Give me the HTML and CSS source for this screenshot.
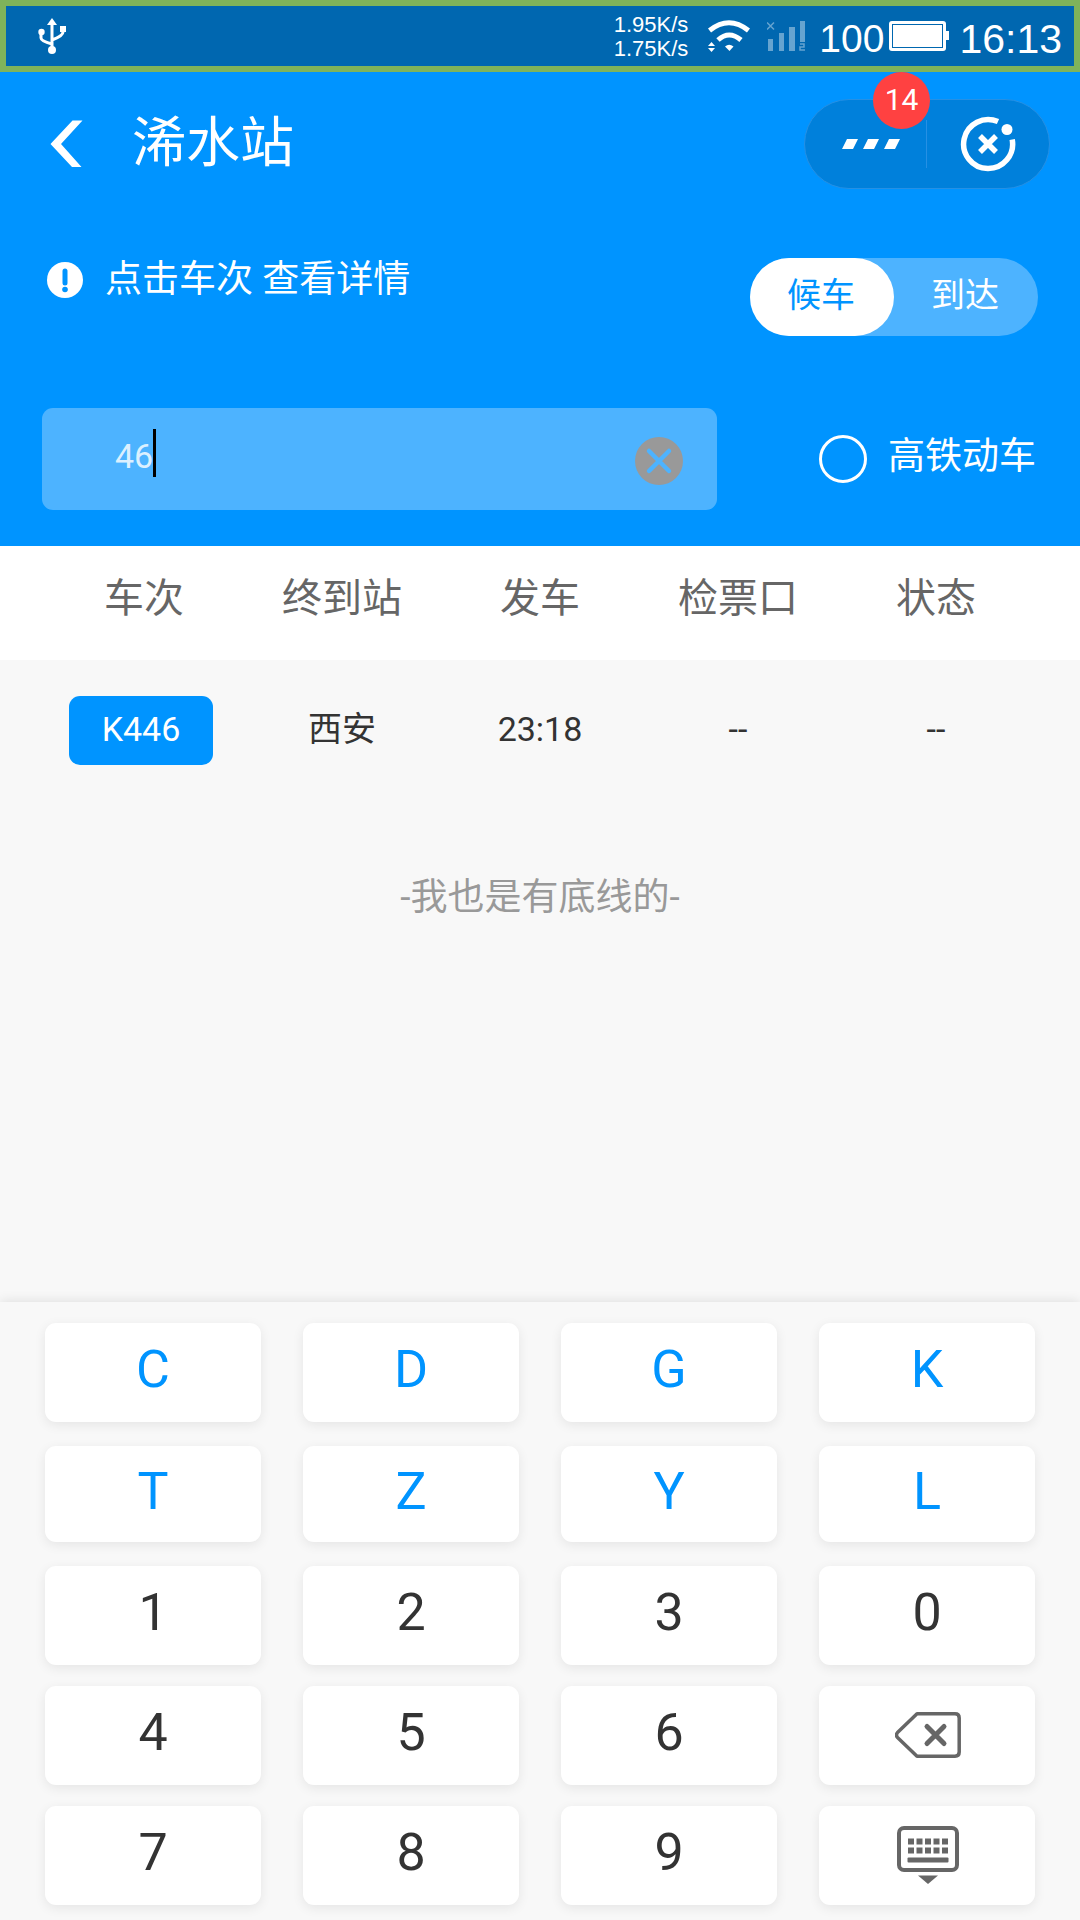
FILE: index.html
```html
<!DOCTYPE html>
<html lang="zh-CN">
<head>
<meta charset="utf-8">
<meta name="viewport" content="width=device-width, initial-scale=1">
<title>浠水站</title>
<link rel="stylesheet" href="styles.css">
</head>
<body>
<div class="page">
  <div class="status">
    <svg class="status-usb" width="28" height="36" viewBox="0 0 28 36" fill="none" stroke="#fff">
      <path d="M14 5v27M14 26Q3 23 3 20V14M14 22Q25 18 25 14V10" stroke-width="3"/>
      <path d="M14 0l5 7H9z" fill="#fff" stroke="none"/>
      <circle cx="3.500" cy="14" r="3.200" fill="#fff" stroke="none"/>
      <path d="M22 8h6v6h-6z" fill="#fff" stroke="none"/>
      <circle cx="14" cy="32" r="4" fill="#fff" stroke="none"/>
    </svg>
    <div class="status-speed"><span>1.95K/s</span><span>1.75K/s</span></div>
    <svg class="status-wifi" width="42" height="32" viewBox="0 0 42 32" fill="none" stroke="#fff" stroke-width="5">
      <path d="M1.500 10.500Q21-5 40.500 10.500M10 20Q21 10 33 20"/>
      <path d="M17 26.500Q21 23 25.500 26.500L21.500 31z" fill="#fff" stroke="none"/>
      <path d="M0 26l3.500-4 3.500 4zM0 28h7l-3.500 4z" fill="#fff" stroke="none"/>
    </svg>
    <svg class="status-signal" width="38" height="30" viewBox="0 0 38 30" fill="#66a4d0">
      <path d="M1 18h5v12H1zM12 12h5v18h-5zM22 6h6v24h-6zM33 0h5v21h-5z"/>
      <path d="M0 1.500l7 7M7 1.500l-7 7M33 23h4v3h-4v3h5" fill="none" stroke="#66a4d0" stroke-width="1.500"/>
    </svg>
    <span class="status-level">100</span>
    <svg class="status-battery" width="60" height="30" viewBox="0 0 60 30">
      <rect width="57" height="30" rx="3" fill="#fff"/>
      <rect x="3.500" y="3.500" width="50" height="23" fill="none" stroke="#0067b0"/>
      <path d="M57 10h3v9h-3z" fill="#fff"/>
    </svg>
    <span class="status-clock">16:13</span>
  </div>

  <header class="hero">
    <div class="titlebar">
      <button class="back" type="button" aria-label="返回">
        <svg width="34" height="48" viewBox="0 0 34 48"><path d="M22.500 0.500h10L11 24l20.500 23H22L0.500 24z" fill="#fff"/></svg>
      </button>
      <h1 class="title">浠水站</h1>
      <div class="capsule">
        <button class="capsule-btn capsule-more" type="button" aria-label="更多">
          <svg width="58" height="10" viewBox="0 0 58 10" fill="#fff"><path d="M5 0h11l-5 10H0zM26 0h11l-5 10H21zM47 0h11l-5 10H42z"/></svg>
          <span class="badge">14</span>
        </button>
        <button class="capsule-btn" type="button" aria-label="关闭">
          <svg width="56" height="56" viewBox="0 0 56 56" fill="none" stroke="#fff">
            <path d="M38 5.600A24.500 24.500 0 1 0 52.200 23.500" stroke-width="5.500"/>
            <path d="M20 20l16 16M36 20L20 36" stroke-width="5.500"/>
            <circle cx="47" cy="13.500" r="5.500" fill="#fff" stroke="none"/>
          </svg>
        </button>
      </div>
    </div>

    <div class="notice-row">
      <p class="notice">
        <svg width="36" height="36" viewBox="0 0 36 36"><circle cx="18" cy="18" r="18" fill="#fff"/><path d="M18 9v12" stroke="#0094ff" stroke-width="5" stroke-linecap="round"/><circle cx="18" cy="27.500" r="2.800" fill="#0094ff"/></svg>
        <span>点击车次 查看详情</span>
      </p>
      <div class="segment">
        <button class="segment-btn segment-on" type="button">候车</button>
        <button class="segment-btn" type="button">到达</button>
      </div>
    </div>

    <div class="search-row">
      <div class="search">
        <input class="search-input" style="width:2ch" type="text" value="46" aria-label="车次">
        <span class="caret"></span>
        <button class="clear" type="button" aria-label="清除">
          <svg width="48" height="48" viewBox="0 0 48 48"><circle cx="24" cy="24" r="24" fill="#999"/><path d="M14 14l20 20M34 14L14 34" stroke="#4db3ff" stroke-width="4.500" stroke-linecap="round"/></svg>
        </button>
      </div>
      <label class="filter"><input class="filter-radio" type="radio" name="fast"><span>高铁动车</span></label>
    </div>
  </header>

  <main class="board">
    <table class="trains">
      <thead>
        <tr><th>车次</th><th>终到站</th><th>发车</th><th>检票口</th><th>状态</th></tr>
      </thead>
      <tbody>
        <tr><td><button class="train" type="button">K446</button></td><td>西安</td><td>23:18</td><td>--</td><td>--</td></tr>
      </tbody>
    </table>
    <p class="end">-我也是有底线的-</p>
  </main>

  <section class="keypad" aria-label="键盘">
    <div class="keys keys-letters">
      <button type="button">C</button><button type="button">D</button><button type="button">G</button><button type="button">K</button>
      <button type="button">T</button><button type="button">Z</button><button type="button">Y</button><button type="button">L</button>
    </div>
    <div class="keys keys-digits">
      <button type="button">1</button><button type="button">2</button><button type="button">3</button><button type="button">0</button>
      <button type="button">4</button><button type="button">5</button><button type="button">6</button>
      <button class="key-icon" type="button" aria-label="删除">
        <svg width="66" height="46" viewBox="0 0 66 46" fill="none" stroke="#666" stroke-width="3.500" stroke-linejoin="round">
          <path d="M22 1.800H60Q64.200 1.800 64.200 6V40Q64.200 44.200 60 44.200H22L2.500 25.500Q.5 23 2.500 20.500Z"/>
          <path d="M32 14.500l17 17M49 14.500l-17 17" stroke-width="5" stroke-linecap="round"/>
        </svg>
      </button>
      <button type="button">7</button><button type="button">8</button><button type="button">9</button>
      <button class="key-icon" type="button" aria-label="收起键盘">
        <svg width="62" height="58" viewBox="0 0 62 58" fill="#666">
          <rect x="2" y="2" width="58" height="42" rx="5" fill="none" stroke="#666" stroke-width="4"/>
          <path d="M11 15.500h40M11 24.500h40" fill="none" stroke="#666" stroke-width="6" stroke-dasharray="6 2.500"/>
          <rect x="10.500" y="31.500" width="41" height="5" rx="1"/>
          <path d="M21 49.500h20L31 58z"/>
        </svg>
      </button>
    </div>
  </section>
</div>
</body>
</html>
```

FILE: styles.css
```css
* { box-sizing: border-box; }

body {
  margin: 0;
  background: #f8f8f8;
  color: #333;
  font-family: Roboto, "Noto Sans CJK SC", sans-serif;
}

h1, p { margin: 0; font-weight: 400; }

button {
  margin: 0;
  padding: 0;
  border: 0;
  background: none;
  color: inherit;
  font: inherit;
}

svg { display: block; flex: none; }

.page {
  display: flex;
  flex-direction: column;
  min-height: 100vh;
}

/* phone status bar */
.status {
  display: flex;
  align-items: center;
  height: 72px;
  padding: 0 12px 0 32px;
  border: 6px solid #7fb35a;
  background: #0067b0;
  color: #fff;
  font-family: "Liberation Sans", Arial, sans-serif;
}
.status-usb { margin-right: auto; }
.status-speed {
  display: flex;
  flex-direction: column;
  padding-top: 2px;
  font-size: 22px;
  line-height: 24px;
}
.status-wifi { margin-left: 20px; }
.status-signal { margin-left: 17px; }
.status-level {
  margin-left: 14px;
  padding-top: 5px;
  font-size: 39px;
  line-height: 40px;
}
.status-battery { margin-left: 5px; }
.status-clock {
  margin-left: 10px;
  padding-top: 5px;
  font-size: 41px;
  line-height: 44px;
}

/* blue header */
.hero {
  padding-bottom: 36px;
  background: #0094ff;
  color: #fff;
}
.titlebar {
  display: flex;
  align-items: center;
  height: 144px;
  padding: 0 30px 0 50px;
}
.title {
  margin-left: 48px;
  font-size: 54px;
  line-height: 64px;
}
.capsule {
  display: flex;
  width: 246px;
  height: 90px;
  margin-left: auto;
  border: 1px solid #2690e4;
  border-radius: 45px;
  background: #0080db;
}
.capsule-btn {
  position: relative;
  display: flex;
  flex: none;
  align-items: center;
  justify-content: center;
  width: 50%;
}
.capsule-more {
  padding-left: 10px;
  background: linear-gradient(#2690e4, #2690e4) right center / 1px 48px no-repeat;
}
.badge {
  position: absolute;
  top: -28px;
  right: -3px;
  width: 57px;
  height: 57px;
  border-radius: 50%;
  background: #ff4141;
  font-size: 30px;
  line-height: 56px;
  text-align: center;
}

.notice-row {
  display: flex;
  align-items: flex-start;
  justify-content: space-between;
  padding: 42px 42px 0 47px;
}
.notice {
  display: flex;
  align-items: center;
  gap: 22px;
  font-size: 37px;
  line-height: 44px;
}
.segment {
  display: flex;
  border-radius: 39px;
  background: #4db3ff;
}
.segment-btn {
  width: 144px;
  height: 78px;
  padding: 0 2px 10px 0;
  border-radius: 39px;
  font-size: 34px;
}
.segment-on { background: #fff; color: #0094ff; }

.search-row {
  display: flex;
  align-items: center;
  justify-content: space-between;
  padding: 72px 44px 0 42px;
}
.search {
  display: flex;
  flex: 0 1 675px;
  align-items: center;
  height: 102px;
  padding: 0 34px 0 73px;
  border-radius: 11px;
  background: #4db3ff;
}
.search-input {
  height: 60px;
  padding: 0 0 6px;
  border: 0;
  outline: 0;
  background: none;
  color: #dbf0ff;
  font: 34px Roboto, sans-serif;
}
.caret {
  width: 3px;
  height: 48px;
  margin-bottom: 12px;
  background: #000;
}
.clear { margin: 4px 0 0 auto; }
.filter {
  display: flex;
  align-items: center;
  gap: 21px;
  font-size: 37px;
  line-height: 44px;
}
.filter span { padding-bottom: 4px; }
.filter-radio {
  width: 48px;
  height: 48px;
  margin: 0;
  border: 3px solid #fff;
  border-radius: 50%;
  appearance: none;
}

/* departures */
.board { flex: 1; }
.trains, .trains thead, .trains tbody { display: block; }
.trains tr {
  display: grid;
  grid-template-columns: repeat(5, 1fr);
  align-items: center;
  padding: 0 45px;
  line-height: 48px;
  text-align: center;
}
.trains th {
  padding: 0 0 8px;
  color: #666;
  font-size: 40px;
  font-weight: 400;
}
.trains td { padding: 0 0 4px; }
.trains thead tr { height: 114px; background: #fff; }
.trains tbody tr { height: 141px; font-size: 34px; }
.trains td:first-child { padding: 0 6px 0 0; }
.train {
  display: block;
  width: 144px;
  height: 69px;
  margin: 0 auto;
  padding-bottom: 4px;
  border-radius: 11px;
  background: #0094ff;
  color: #fff;
}
.end {
  padding: 73px 0 48px;
  color: #999;
  font-size: 37px;
  line-height: 48px;
  text-align: center;
}

/* on-screen keyboard */
.keypad {
  display: flex;
  flex-direction: column;
  gap: 24px;
  padding: 21px 45px 15px;
  background: #f8f8f8;
  box-shadow: 0 0 12px rgba(0, 0, 0, 0.12);
}
.keys {
  display: grid;
  grid-template-columns: repeat(4, 1fr);
  column-gap: 42px;
}
.keys-letters {
  grid-template-rows: 99px 96px;
  row-gap: 24px;
  color: #0094ff;
}
.keys-digits {
  grid-auto-rows: 99px;
  row-gap: 21px;
}
.keys button {
  display: flex;
  align-items: center;
  justify-content: center;
  padding-bottom: 6px;
  border-radius: 11px;
  background: #fff;
  box-shadow: 0 3px 12px rgba(0, 0, 0, 0.08);
  font-size: 52px;
}
.keys .key-icon { padding: 0 0 2px 2px; }
```
